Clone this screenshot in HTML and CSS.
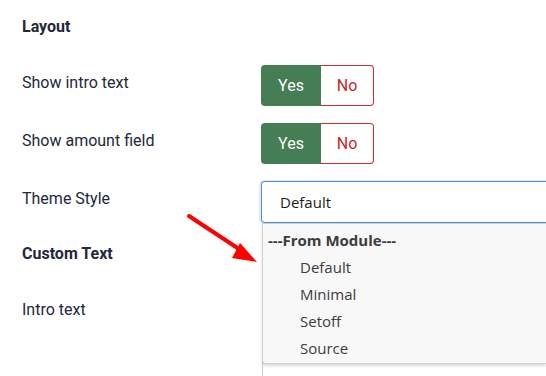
FILE: index.html
```html
<!DOCTYPE html>
<html lang="en">
<head>
    <meta charset="UTF-8">
    <title>Module options</title>
    <link rel="stylesheet" href="styles.css">
</head>
<body>
    <div class="options">
        <h3 class="section-title">Layout</h3>

        <div class="row">
            <label class="row-label">Show intro text</label>
            <div class="switcher">
                <span class="switch-yes">Yes</span>
                <span class="switch-no">No</span>
            </div>
        </div>

        <div class="row">
            <label class="row-label">Show amount field</label>
            <div class="switcher">
                <span class="switch-yes">Yes</span>
                <span class="switch-no">No</span>
            </div>
        </div>

        <div class="row">
            <label class="row-label">Theme Style</label>
            <div class="select-wrap">
                <div class="select">Default</div>
                <!-- open list of the select -->
                <ul class="select-list">
                    <li class="group">---From Module---</li>
                    <li>Default</li>
                    <li>Minimal</li>
                    <li>Setoff</li>
                    <li>Source</li>
                </ul>
            </div>
        </div>

        <h3 class="section-title second">Custom Text</h3>

        <div class="row">
            <label class="row-label">Intro text</label>
            <div class="editor"></div>
        </div>
    </div>

    <svg class="pointer" width="90" height="70" viewBox="0 0 90 70">
        <line x1="9" y1="11" x2="62" y2="46" stroke="#f00" stroke-width="4" stroke-linecap="round"/>
        <polygon points="60,38 52,53 77,57" fill="#f00"/>
    </svg>
</body>
</html>
```

FILE: styles.css
```css
* {
    margin: 0;
    padding: 0;
    box-sizing: border-box;
}

html,
body {
    height: 100%;
}

body {
    background-color: #fff;
    font-family: Roboto, sans-serif;
    color: #22283a;
    position: relative;
}

.options {
    padding: 16px 0 0 22px;
}

.section-title {
    font-size: 16px;
    font-weight: 700;
    line-height: 22px;
    margin-bottom: 27px;
}

.section-title.second {
    padding-top: 4px;
    margin-bottom: 27px;
}

.row {
    display: grid;
    grid-template-columns: 239px 1fr;
    height: 41px;
    margin-bottom: 17px;
}

.row-label {
    font-size: 16px;
    line-height: 22px;
    padding-top: 7px;
}

.switcher {
    display: flex;
    width: 113px;
    height: 41px;
    font-size: 16px;
}

.switcher span {
    display: flex;
    align-items: center;
    justify-content: center;
}

.switch-yes {
    width: 60px;
    background-color: #457d54;
    color: #fff;
    border-radius: 4px 0 0 4px;
}

.switch-no {
    width: 53px;
    background-color: #fff;
    color: #c52827;
    border: 1px solid #c9302c;
    border-left: none;
    border-radius: 0 4px 4px 0;
}

.select-wrap {
    position: relative;
}

.select {
    height: 42px;
    border: 1px solid #4a90e2;
    border-right: none;
    border-radius: 4px 0 0 4px;
    box-shadow: -1px 0 0 1px #e6e8eb;
    padding-left: 18px;
    display: flex;
    align-items: center;
    font-family: "Open Sans", sans-serif;
    font-size: 15px;
    color: #1c1c1c;
}

.select-list {
    position: absolute;
    top: 42px;
    left: 1px;
    right: 0;
    list-style: none;
    background-color: #f8f8f8;
    border: 1px solid #d0d0d0;
    border-right: none;
    border-radius: 0 0 0 4px;
    box-shadow: 0 2px 3px rgba(0, 0, 0, 0.15);
    padding: 3px 0 1px;
    font-family: "Open Sans", sans-serif;
    font-size: 15px;
    color: #3c3c3c;
    z-index: 2;
}

.select-list li {
    height: 27px;
    line-height: 27px;
    padding-left: 37px;
}

.select-list li.group {
    padding-left: 5px;
    font-weight: 700;
}

.editor {
    height: 84px;
    border-left: 1px solid #c9ced6;
    border-top: 1px solid #c9ced6;
    border-radius: 4px 0 0 0;
    margin-left: 1px;
}

.pointer {
    position: absolute;
    left: 180px;
    top: 205px;
}
```
